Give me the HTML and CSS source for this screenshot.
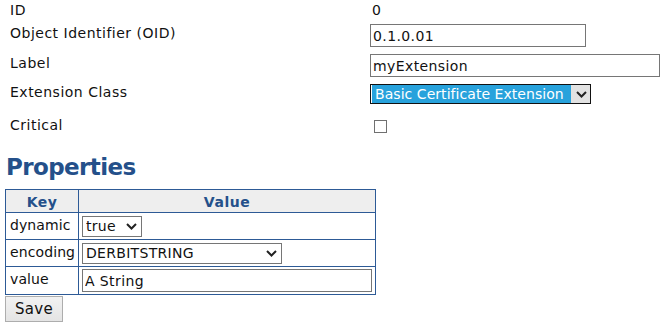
FILE: index.html
```html
<!DOCTYPE html>
<html>
<head>
<meta charset="utf-8">
<link rel="stylesheet" href="styles.css">
</head>
<body>
<div class="form">
  <div class="row r-id"><div class="lbl">ID</div><div class="val">0</div></div>
  <div class="row r-oid"><div class="lbl">Object Identifier (OID)</div><div class="val"><input class="txt oid" type="text" value="0.1.0.01"></div></div>
  <div class="row r-label"><div class="lbl">Label</div><div class="val"><input class="txt label" type="text" value="myExtension"></div></div>
  <div class="row r-class"><div class="lbl">Extension Class</div><div class="val"><span class="sel sel-focus"><select class="cls"><option>Basic Certificate Extension</option></select><svg class="chev" width="11" height="7" viewBox="0 0 11 7"><path d="M1 1 L5.5 5.5 L10 1" fill="none" stroke="#222" stroke-width="2"/></svg></span></div></div>
  <div class="row r-crit"><div class="lbl">Critical</div><div class="val"><span class="cb"></span></div></div>
</div>
<h2 class="heading">Properties</h2>
<table class="props">
  <thead><tr><th class="kcol">Key</th><th>Value</th></tr></thead>
  <tbody>
    <tr><td class="key">dynamic</td><td class="cell"><span class="sel"><select class="small dyn"><option>true</option></select><svg class="chev" width="11" height="7" viewBox="0 0 11 7"><path d="M1 1 L5.5 5.5 L10 1" fill="none" stroke="#222" stroke-width="2"/></svg></span></td></tr>
    <tr><td class="key">encoding</td><td class="cell"><span class="sel"><select class="small enc"><option>DERBITSTRING</option></select><svg class="chev" width="11" height="7" viewBox="0 0 11 7"><path d="M1 1 L5.5 5.5 L10 1" fill="none" stroke="#222" stroke-width="2"/></svg></span></td></tr>
    <tr><td class="key">value</td><td class="cell"><input class="txt vinput" type="text" value="A String"></td></tr>
  </tbody>
</table>
<button class="save">Save</button>
</body>
</html>
```
FILE: styles.css
```css
html, body { margin: 0; padding: 0; background: #fff; }
body { font-family: "DejaVu Sans", Verdana, sans-serif; font-size: 14px; letter-spacing: 0.5px; color: #111; }
.form { padding-left: 10px; }
.row { display: flex; align-items: flex-start; line-height: 16px; }
.lbl { width: 360px; }
.val { flex: 1; }
.r-id { margin-top: 2px; height: 16px; }
.r-id .val { padding-left: 2px; }
.r-oid { margin-top: 6px; }
.r-oid .lbl { padding-top: 1px; }
.r-label { margin-top: 7px; }
.r-label .lbl { padding-top: 1px; }
.r-class { margin-top: 7px; }
.r-crit { margin-top: 13px; height: 16px; }
.txt { font-family: "DejaVu Sans", Verdana, sans-serif; font-size: 14px; letter-spacing: 0.4px; color: #111; border: 1px solid #767676; box-sizing: border-box; height: 23px; padding: 0 2px; margin: 0; background: #fff; outline: none; }
.oid { width: 216px; }
.label { width: 290px; }
.sel { position: relative; display: inline-block; vertical-align: top; }
.sel select { -webkit-appearance: none; appearance: none; font-family: "DejaVu Sans", Verdana, sans-serif; font-size: 14px; letter-spacing: 0.3px; color: #111; margin: 0; box-sizing: border-box; border: 1px solid #767676; background: #fff; padding: 0 0 0 3px; outline: none; border-radius: 0; }
.chev { position: absolute; right: 5px; top: 50%; margin-top: -3px; pointer-events: none; }
.cls { width: 221px; height: 20px; border-color: #111 !important; color: #fff !important; letter-spacing: 0.05px !important; padding: 0 0 0 4px !important; background: linear-gradient(to right, #fff 0, #fff 1px, #28a2dc 1px, #28a2dc calc(100% - 19px), #e2e2e2 calc(100% - 19px)) !important; }
.sel-focus .chev { right: 4px; }
.cb { display: block; width: 13px; height: 13px; box-sizing: border-box; border: 1px solid #707070; background: #fff; margin: 3px 0 0 4px; }
.heading { margin: 20px 0 8px 6px; font-size: 23px; letter-spacing: -0.6px; line-height: 28px; font-weight: bold; color: #24508a; }
.props { border-collapse: collapse; margin-left: 5px; width: 371px; }
.props th, .props td { border: 1px solid #2d5a96; padding: 0; }
.props th { background: #eeeeee; color: #24508a; font-weight: bold; height: 23px; line-height: 18px; padding-top: 2px; box-sizing: border-box; vertical-align: middle; }
.kcol { width: 73px; }
.props td { height: 27px; box-sizing: border-box; }
.key { vertical-align: top; padding: 3px 0 0 4px !important; line-height: 18px; letter-spacing: 0.1px; }
.cell { vertical-align: middle; padding: 0 3px 0 3px !important; }
.small { height: 21px; }
.dyn { width: 60px; }
.enc { width: 200px; }
.vinput { width: 290px; display: block; }
tbody tr:last-child td { height: 28px; }
.save { display: block; margin: 1px 0 0 5px; width: 58px; height: 26px; font-family: "DejaVu Sans", Verdana, sans-serif; font-size: 15px; letter-spacing: 0.3px; color: #111; border: 1px solid #adadad; background: linear-gradient(#f2f2f2, #e4e4e4); padding: 0; border-radius: 0; }
```
